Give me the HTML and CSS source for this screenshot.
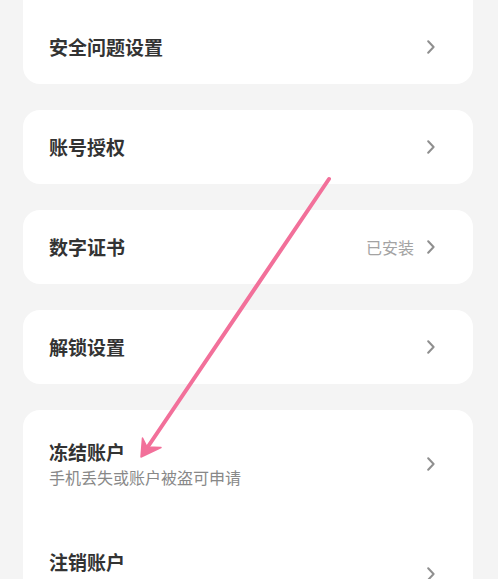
FILE: index.html
```html
<!DOCTYPE html>
<html lang="zh-CN">
<head>
<meta charset="utf-8">
<title>账户与安全</title>
<link rel="stylesheet" href="styles.css">
</head>
<body>
<div class="page">
  <div class="card card-first">
    <div class="row">
      <div class="title">安全问题设置</div>
      <svg class="chev" viewBox="0 0 8 14"><path d="M1.2 1.2 L6.6 7 L1.2 12.8"/></svg>
    </div>
  </div>
  <div class="card">
    <div class="row">
      <div class="title">账号授权</div>
      <svg class="chev" viewBox="0 0 8 14"><path d="M1.2 1.2 L6.6 7 L1.2 12.8"/></svg>
    </div>
  </div>
  <div class="card">
    <div class="row">
      <div class="title">数字证书</div>
      <div class="value">已安装</div>
      <svg class="chev" viewBox="0 0 8 14"><path d="M1.2 1.2 L6.6 7 L1.2 12.8"/></svg>
    </div>
  </div>
  <div class="card">
    <div class="row">
      <div class="title">解锁设置</div>
      <svg class="chev" viewBox="0 0 8 14"><path d="M1.2 1.2 L6.6 7 L1.2 12.8"/></svg>
    </div>
  </div>
  <div class="card">
    <div class="row row-tall">
      <div class="texts">
        <div class="title">冻结账户</div>
        <div class="sub">手机丢失或账户被盗可申请</div>
      </div>
      <svg class="chev" viewBox="0 0 8 14"><path d="M1.2 1.2 L6.6 7 L1.2 12.8"/></svg>
    </div>
    <div class="row row-tall row-last">
      <div class="texts">
        <div class="title">注销账户</div>
        <div class="sub">永久注销账户数据</div>
      </div>
      <svg class="chev" viewBox="0 0 8 14"><path d="M1.2 1.2 L6.6 7 L1.2 12.8"/></svg>
    </div>
  </div>
</div>
<svg class="arrow" viewBox="0 0 498 579" width="498" height="579">
  <line x1="329" y1="179" x2="145" y2="451" />
  <path class="head" d="M141 457 L142.5 438 L147 447 L161 447.5 Z"/>
</svg>
</body>
</html>
```

FILE: styles.css
```css
html, body {
  margin: 0;
  padding: 0;
  background: #f4f4f4;
  height: 579px;
  overflow: hidden;
}
body {
  position: relative;
  font-family: "Noto Sans CJK SC", "Noto Sans", sans-serif;
  color: #333;
}
.page {
  margin-top: -30px;
  padding: 0 25px 0 23px;
  display: flex;
  flex-direction: column;
  gap: 26px;
}
.card {
  background: #fff;
  border-radius: 17px;
}
.card-first {
  padding-top: 40px;
}
.row {
  height: 74px;
  display: flex;
  align-items: center;
  padding: 0 38px 0 26px;
}
.row-tall {
  height: 108px;
}
.row-last {
  height: 112px;
}
.title {
  font-size: 19px;
  font-weight: 700;
  line-height: 26px;
  color: #333;
  flex: 1;
}
.texts {
  flex: 1;
  display: flex;
  flex-direction: column;
}
.sub {
  font-size: 16px;
  line-height: 24px;
  color: #888;
}
.value {
  font-size: 16px;
  color: #a3a3a3;
  margin-right: 13px;
}
.chev {
  width: 8px;
  height: 14px;
  fill: none;
  stroke: #8f8f8f;
  stroke-width: 2;
  stroke-linecap: round;
  stroke-linejoin: round;
}
.arrow {
  position: absolute;
  left: 0;
  top: 0;
  pointer-events: none;
}
.arrow line {
  stroke: #f2709a;
  stroke-width: 4;
  stroke-linecap: round;
}
.arrow .head {
  fill: #f2709a;
  stroke: #f2709a;
  stroke-width: 1.5;
  stroke-linejoin: round;
}
```
